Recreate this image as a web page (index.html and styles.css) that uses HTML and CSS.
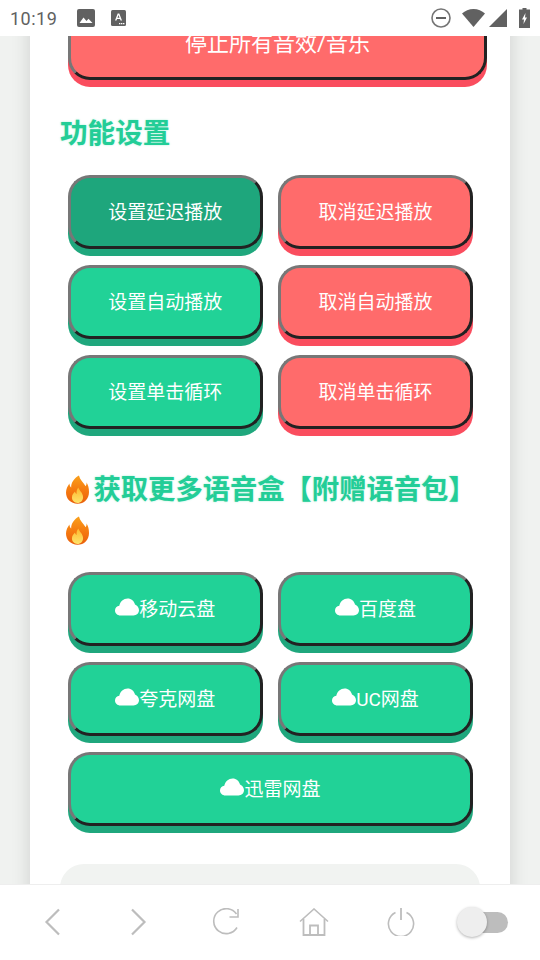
FILE: index.html
```html
<!DOCTYPE html>
<html lang="zh-CN">
<head>
    <meta charset="UTF-8">
    <meta name="viewport" content="width=device-width, initial-scale=1.0">
    <title>语音盒</title>
    <link rel="stylesheet" href="styles.css">
</head>
<body>
    <svg class="defs" width="0" height="0">
        <defs>
            <linearGradient id="flameOuter" x1="0" y1="0" x2="0" y2="1">
                <stop offset="0" stop-color="#f9a01b"/>
                <stop offset="0.55" stop-color="#f5780f"/>
                <stop offset="1" stop-color="#e9600c"/>
            </linearGradient>
            <linearGradient id="flameInner" x1="0" y1="0" x2="0" y2="1">
                <stop offset="0" stop-color="#fdb92e"/>
                <stop offset="1" stop-color="#fee36a"/>
            </linearGradient>
            <symbol id="flame" viewBox="0 0 24 30">
                <path d="M13.5 0.5C14.5 5 18 7.5 20.5 11.5C21.6 9.8 21.6 8.6 21.3 7.4C23.2 10.4 24 13.7 24 17.5C24 24.8 19 29.8 12 29.8C5 29.8 0 25 0 18.2C0 14.4 1.8 11.4 3.6 8.8C3.7 10.6 4.2 12 5.4 13C5.2 8 8.6 3.2 13.5 0.5Z" fill="url(#flameOuter)"/>
                <path d="M13 13C13.4 16 17.8 18.4 17.8 23C17.8 26.6 15.2 29 12 29C8.8 29 6.2 26.6 6.2 23.4C6.2 20.6 8 19 9.4 17.2C9.6 18.4 10.2 19.2 11 19.6C10.8 17 11.4 14.8 13 13Z" fill="url(#flameInner)"/>
            </symbol>
            <symbol id="cloud" viewBox="0 0 24 18">
                <path d="M5.5 17.5C2.4 17.5 0 15.3 0 12.5C0 10 1.8 8.1 4.3 7.7C5.2 3.5 8.6 0.5 12.6 0.5C16.3 0.5 19.2 3 20 6.6C22.4 7.6 24 9.8 24 12.3C24 15.3 21.5 17.5 18.5 17.5Z" fill="#fff"/>
            </symbol>
        </defs>
    </svg>

    <div class="status-bar">
        <span class="clock">10:19</span>
        <svg class="note-icon" width="18" height="18" viewBox="0 0 18 18"><rect width="18" height="18" rx="2" fill="#616161"/><path d="M2.5 14L6.5 8.5L9.5 12L11.5 9.8L15.5 14Z" fill="#fff"/></svg>
        <svg class="note-icon note-font" width="15" height="16" viewBox="0 0 15 16"><rect width="15" height="16" rx="1.5" fill="#616161"/><path d="M4 10.5L6.7 3.5H8.3L11 10.5H9.5L9 9H6L5.5 10.5ZM6.5 7.8H8.5L7.5 5Z" fill="#fff"/><path d="M8 13h1.4v1.2H8ZM10 13h1.4v1.2H10ZM12 13h1.4v1.2H12Z" fill="#fff"/></svg>
        <span class="status-right">
            <svg width="20" height="20" viewBox="0 0 20 20"><circle cx="10" cy="10" r="9" fill="none" stroke="#757575" stroke-width="1.6"/><rect x="5" y="9" width="10" height="2" fill="#616161"/></svg>
            <svg class="wifi" width="23" height="18" viewBox="0 0 23 18"><path d="M0 4.5C3 1.8 7 0 11.5 0S20 1.8 23 4.5L11.5 18Z" fill="#616161"/></svg>
            <svg class="signal" width="18" height="18" viewBox="0 0 18 18"><path d="M18 0V18H0Z" fill="#616161"/></svg>
            <svg class="battery" width="11" height="20" viewBox="0 0 11 20"><path d="M3.5 0H7.5V1.5H11V20H0V1.5H3.5Z" fill="#616161"/><path d="M6.5 5L3 11.5H5L4.5 16L8 9.5H6Z" fill="#fff"/></svg>
        </span>
    </div>

    <div class="viewport">
        <div class="card">
            <button class="btn btn-red btn-big">停止所有音效/音乐</button>

            <h2 class="title title-first">功能设置</h2>
            <div class="btn-grid">
                <button class="btn btn-active">设置延迟播放</button>
                <button class="btn btn-red">取消延迟播放</button>
                <button class="btn">设置自动播放</button>
                <button class="btn btn-red">取消自动播放</button>
                <button class="btn">设置单击循环</button>
                <button class="btn btn-red">取消单击循环</button>
            </div>

            <h2 class="title title-more"><svg class="flame"><use href="#flame"/></svg>获取更多语音盒【附赠语音包】<svg class="flame"><use href="#flame"/></svg></h2>
            <div class="btn-grid">
                <button class="btn"><svg class="cloud"><use href="#cloud"/></svg>移动云盘</button>
                <button class="btn"><svg class="cloud"><use href="#cloud"/></svg>百度盘</button>
                <button class="btn"><svg class="cloud"><use href="#cloud"/></svg>夸克网盘</button>
                <button class="btn"><svg class="cloud"><use href="#cloud"/></svg>UC网盘</button>
                <button class="btn btn-wide"><svg class="cloud"><use href="#cloud"/></svg>迅雷网盘</button>
            </div>

            <div class="info-box"></div>
        </div>
    </div>

    <div class="bottom-bar">
        <div class="bar-item"><svg width="16" height="28" viewBox="0 0 16 28"><path d="M15 1.5L2.5 14L15 26.5" fill="none" stroke="#bdbdbd" stroke-width="2.2"/></svg></div>
        <div class="bar-item"><svg width="16" height="28" viewBox="0 0 16 28"><path d="M1 1.5L13.5 14L1 26.5" fill="none" stroke="#bdbdbd" stroke-width="2.2"/></svg></div>
        <div class="bar-item"><svg width="28" height="28" viewBox="0 0 28 28"><path d="M25 19.5A12.5 12.5 0 1 1 24.5 6" fill="none" stroke="#bdbdbd" stroke-width="1.6"/><path d="M26 1V9H17.5" fill="none" stroke="#bdbdbd" stroke-width="1.6"/></svg></div>
        <div class="bar-item"><svg width="30" height="28" viewBox="0 0 30 28"><path d="M1 13.5L15 1L29 13.5" fill="none" stroke="#bdbdbd" stroke-width="1.6"/><path d="M4.5 11V27H25.5V11" fill="none" stroke="#bdbdbd" stroke-width="1.8"/><path d="M11 27V17.5H19V27" fill="none" stroke="#bdbdbd" stroke-width="1.8"/></svg></div>
        <div class="bar-item"><svg width="28" height="28" viewBox="0 0 28 28"><path d="M8.5 4.5A12.6 12.6 0 1 0 19.5 4.5" fill="none" stroke="#bdbdbd" stroke-width="1.6"/><path d="M14 0V12" fill="none" stroke="#bdbdbd" stroke-width="1.8"/></svg></div>
        <div class="toggle"><span class="toggle-knob"></span></div>
    </div>
</body>
</html>
```

FILE: styles.css
```css
* {
    margin: 0;
    padding: 0;
    box-sizing: border-box;
}

html, body {
    width: 540px;
    height: 960px;
    overflow: hidden;
}

body {
    font-family: Roboto, "Noto Sans CJK SC", sans-serif;
    background: #fff;
    display: flex;
    flex-direction: column;
}

.defs {
    position: absolute;
}

.status-bar {
    height: 36px;
    flex: none;
    display: flex;
    align-items: center;
    padding: 0 10px;
    background: #fff;
}

.clock {
    font-size: 18px;
    color: #616161;
    letter-spacing: 0.5px;
    width: 67px;
}

.note-icon {
    flex: none;
}

.note-font {
    margin-left: 16px;
}

.status-right {
    margin-left: auto;
    display: flex;
    align-items: center;
}

.wifi {
    margin-left: 11px;
}

.signal {
    margin-left: 4px;
}

.battery {
    margin-left: 12px;
}

.viewport {
    height: 848px;
    flex: none;
    overflow: hidden;
    background: #f0f2f0;
    padding: 0 30px;
}

.card {
    background: #fff;
    height: 900px;
    margin-top: -30px;
    padding: 0 30px;
    box-shadow: 0 0 18px rgba(0, 0, 0, 0.14);
}

.btn {
    display: flex;
    align-items: center;
    justify-content: center;
    height: 74px;
    width: 100%;
    padding-bottom: 4px;
    border: 3px solid;
    border-color: #777 #222 #222 #777;
    border-radius: 22px;
    background: #21d297;
    color: #fff;
    font-family: inherit;
    font-size: 19px;
    box-shadow: 0 7px 0 #1fa77d;
}

.btn-red {
    background: #ff6b6b;
    box-shadow: 0 7px 0 #fa4d5e;
}

.btn-active {
    background: #1ea67c;
}

.btn-big {
    width: 419px;
    margin: 0 0 0 8px;
    font-size: 22px;
    align-items: flex-start;
    padding: 18px 0 0;
    line-height: 34px;
}

.btn-wide {
    grid-column: span 2;
}

.btn-grid {
    display: grid;
    grid-template-columns: 1fr 1fr;
    gap: 16px 15.6px;
    margin: 0 7.2px 0 8px;
}

.title {
    color: #23cd97;
    font-size: 27.3px;
    font-weight: 700;
    text-shadow: 0 0 2px rgba(33, 210, 151, 0.4);
}

.title-first {
    font-size: 27.6px;
    margin: 32px 0 21px;
    padding-top: 1px;
    height: 42px;
    line-height: 42px;
}

.title-more {
    margin: 39px 0 20px;
    padding-top: 2px;
    height: 84px;
    line-height: 41px;
}

.flame {
    width: 23px;
    height: 29px;
    margin: 0 5px 0 5.5px;
    vertical-align: -5px;
}

.cloud {
    width: 24px;
    height: 18px;
    flex: none;
}

.info-box {
    height: 120px;
    margin-top: 38px;
    border-radius: 24px;
    background: #f1f3f1;
}

.bottom-bar {
    flex: 1;
    display: flex;
    align-items: center;
    padding: 0 0 1px 8px;
    background: #fff;
    border-top: 1px solid #eee;
}

.bar-item {
    width: 87.4px;
    flex: none;
    display: flex;
    justify-content: center;
}

.toggle {
    width: 50px;
    height: 21px;
    margin-left: 13px;
    border-radius: 11px;
    background: #bdbdbd;
    position: relative;
}

.toggle-knob {
    position: absolute;
    left: -1px;
    top: -5px;
    width: 30px;
    height: 30px;
    border-radius: 50%;
    background: #eee;
    box-shadow: 0 1px 3px rgba(0, 0, 0, 0.3);
}
```
